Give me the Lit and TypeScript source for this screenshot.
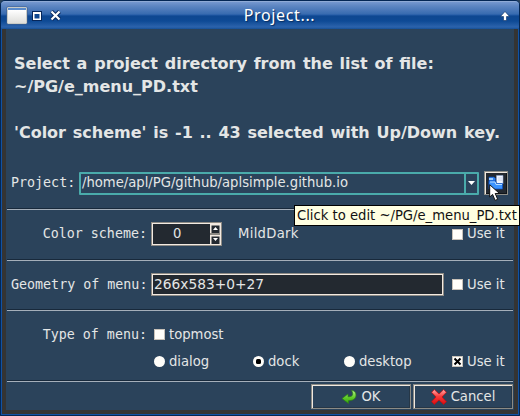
import { LitElement, html, css, svg } from "lit";
import { customElement, state } from "lit/decorators.js";

const folderIcon = svg`
  <svg class="ico16" viewBox="0 0 16 16">
    <path d="M1 2h5l1.500 1.500V12H1z" fill="#2a7ff0" stroke="#0b46a8" stroke-width=".6"/>
    <path d="M1 3h4v2H1z" fill="#9accff"/>
    <path d="M8.500 .5h6.500v8.500H8.500z" fill="#f2f6ff" stroke="#8fa6cc" stroke-width=".6"/>
    <path d="M10 3h4M10 5h4" stroke="#c8d4ea"/>
    <path d="M1 6h6.500l1 2.500h6L14.500 14H1z" fill="#3b93ff" stroke="#0b4fc0" stroke-width=".7"/>
    <path d="M2 7h5l1 2.500h6" fill="none" stroke="#b5dcff"/>
  </svg>`;

const okIcon = svg`
  <svg class="ico16" viewBox="0 0 16 16">
    <defs><linearGradient id="g" x1="0" y1="0" x2="0" y2="1"><stop offset="0" stop-color="#b9f58a"/><stop offset=".55" stop-color="#5fcb28"/><stop offset="1" stop-color="#35a010"/></linearGradient></defs>
    <path d="M10.500 1.500C13 1.500 15 3 15 6c0 3.800-3.200 5.700-7.500 5.700V14.500L1 9.500 7 5v2.800c3 0 4.500-.8 4.700-2.600.1-1.500-.4-2.500-1.200-3.700z" fill="url(#g)" stroke="#2b8412" stroke-width=".7"/>
  </svg>`;

const cancelIcon = svg`
  <svg class="ico16" viewBox="0 0 16 16">
    <defs><linearGradient id="r" x1="0" y1="0" x2="0" y2="1"><stop offset="0" stop-color="#ffb0b0"/><stop offset=".45" stop-color="#f83c3c"/><stop offset="1" stop-color="#d80c10"/></linearGradient></defs>
    <path d="M3.300.6 8 5 12.700.6l2.700 2.700L11 8l4.400 4.700-2.700 2.700L8 11l-4.700 4.400L.6 12.700 5 8 .6 3.300z" fill="url(#r)" stroke="#c50d12" stroke-width=".8" stroke-linejoin="round"/>
  </svg>`;

@customElement("app-root")
export class AppRoot extends LitElement {
  @state() private kind = "dock";
  @state() private project = "/home/apl/PG/github/aplsimple.github.io";

  static styles = css`
    :host { display: block; width: 520px; height: 416px; position: relative; overflow: hidden;
      background: #2b435b; color: #e4e6e6; white-space: nowrap;
      font: 14.65px/16px "DejaVu Sans Condensed", "DejaVu Sans", sans-serif; font-stretch: condensed; }
    *, *::before, *::after { box-sizing: border-box; }
    svg { display: block; flex: none; }
    .ico16 { width: 16px; height: 16px; }
    .window { height: 416px; background: #1152a4; border: 1px solid #032654; border-radius: 5px 5px 0 0;
      display: flex; flex-direction: column; }
    .title { height: 28px; flex: none; display: flex; align-items: center; padding: 0 9px 0 6px;
      border-radius: 4px 4px 0 0; border-top: 1px solid #8fabd6;
      background: linear-gradient(#7598cf 0, #5d86c2 4px, #386bb0 12px, #235ba7 13px, #0e4791 14px, #0e4a95 19px, #2c63ac 25px, #155096 27px); }
    .winicon { width: 20px; height: 17px; border: 1px solid #c9cbc6; border-radius: 1px; box-shadow: 0 0 0 .5px #405e8a;
      background: linear-gradient(#5b8ccc 0 2px, #ffffff 2px, #dededb 100%); }
    .winbtn { margin-left: 5px; }
    .winclose { margin-left: 8px; }
    .caption { flex: 1; text-align: center; font: 16px/22px "Noto Sans", sans-serif; letter-spacing: .65px; color: #fff;
      text-shadow: 1px 1px 1px #092e60; padding: 0 2px 1px 0; }
    .frame { flex: 1; margin: 0 1px 1px; padding: 0 4px 4px; background: #343434; min-height: 0; }
    .body { height: 100%; background: #2b435b; display: flex; flex-direction: column; }
    .intro { height: 134px; padding: 23px 8px 0; font: bold 16px/23px "DejaVu Sans", sans-serif; font-stretch: normal; white-space: pre; word-spacing: 1.2px; }
    .row { display: flex; align-items: center; flex: none; padding: 0 5px; }
    .r1 { height: 45px; padding-bottom: 5px; }
    .r2 { height: 49px; padding-bottom: 1px; }
    .r3 { height: 48px; padding-bottom: 1px; }
    .r4 { height: 69px; display: grid; grid-template-columns: 143px 99px 91px 108px 1fr; grid-template-rows: 27px 27px;
      padding-top: 10px; align-content: start; }
    .sep { height: 2px; flex: none; margin: 0 1px; background: #18293b; border-bottom: 1px solid #a5afba; }
    .label { font: 13.333px/16px "DejaVu Sans Mono", monospace; font-stretch: normal; width: 136px; text-align: right; flex: none; }
    .label.short { width: 64px; }
    .combo { margin-left: 4px; width: 400px; height: 23px; border: 2px solid #4aabab; display: flex; align-items: center; border-radius: 1px; }
    .value { flex: 1; padding: 0 0 2px 1px; }
    .drop { width: 13px; height: 19px; border-left: 2px solid #4aabab; display: grid; place-items: center; }
    .tool { margin-left: 5px; width: 24px; height: 24px; background: #232930; border: 1px solid #8e8e88;
      box-shadow: inset 1px 1px #f0e8df, inset -1px -1px #10151a; display: grid; place-items: center; }
    .field { background: #232930; border: 1px solid #8d8a84; box-shadow: inset 0 0 0 1px #f3eae1; height: 23px; margin-left: 4px; display: flex; align-items: center; }
    .spin { width: 71px; height: 24px; }
    .spin .value { padding-left: 21px; }
    .geo { width: 293px; padding: 0 0 1px 2px; font: 13.75px/16px "DejaVu Sans", sans-serif; font-stretch: normal; }
    .arrows { margin-right: 1px; }
    .scheme { margin-left: 16px; flex: 1; letter-spacing: .3px; padding-bottom: 2px; }
    .push { margin-left: auto; }
    .opt { display: flex; align-items: center; gap: 4px; }
    .text { padding-bottom: 2px; }
    .use { width: 57px; }
    .box { width: 11px; height: 11px; background: #fffefa; border: 1px solid #c8c2b9; display: grid; place-items: center; }
    .radio { width: 11px; height: 11px; border-radius: 50%; background: #fffefa; display: grid; place-items: center; }
    .dot { width: 5px; height: 5px; border-radius: 1.500px; background: #000; }
    .span2 { grid-column: 2 / 6; justify-self: start; }
    .buttons { display: flex; justify-content: flex-end; gap: 2px; padding: 2px 1px 0 0; }
    .btn { width: 100px; height: 25px; display: flex; align-items: center; justify-content: center; gap: 4px;
      border: 1px solid #8c8b85; box-shadow: inset 1px 1px #f0e8df, inset -1px -1px #263747; }
    .tip { position: absolute; left: 294px; top: 205px; width: 226px; height: 21px; background: #ffffe1; color: #111;
      border: 1px solid #000; padding-left: 2px; line-height: 18px; }
    .cursor { position: absolute; left: 489px; top: 184px; }
  `;

  private check(checked = false) {
    return html`<span class="box">${checked
      ? html`<svg width="9" height="9" viewBox="0 0 9 9"><path d="M1.500 1.500l6 6M7.500 1.500l-6 6" stroke="#000" stroke-width="2"/></svg>`
      : ""}</span>`;
  }

  private useIt(checked = false) {
    return html`<span class="opt use">${this.check(checked)}<span class="text">Use it</span></span>`;
  }

  private radio(name: string) {
    return html`<span class="opt" @click=${() => (this.kind = name)}><span class="radio">${this.kind === name
      ? html`<span class="dot"></span>` : ""}</span><span class="text">${name}</span></span>`;
  }

  render() {
    return html`
      <div class="window">
        <div class="title">
          <span class="winicon"></span>
          <svg class="winbtn" width="10" height="10" viewBox="0 0 10 10"><path d="M0 0h10v10H0z" fill="#06265a"/><path d="M1 1h8v8H1z" fill="#fff"/><path d="M2.500 3h5v4.500h-5z" fill="#0e4791"/></svg>
          <svg class="winclose" width="11" height="11" viewBox="0 0 11 11"><path d="M1.500 1.500l8 8M9.500 1.500l-8 8" stroke="#06265a" stroke-width="4"/><path d="M1.500 1.500l8 8M9.500 1.500l-8 8" stroke="#fff" stroke-width="2.200"/></svg>
          <span class="caption">Project...</span>
          <svg width="10" height="10" viewBox="0 0 10 10"><path d="M5 .5L9.500 5.500H6.500V9.500h-3V5.500H.5z" fill="#fff" stroke="#0a2d60" stroke-width=".6"/></svg>
        </div>
        <div class="frame"><div class="body">
          <div class="intro">Select a project directory from the list of file:
~/PG/e_menu_PD.txt

'Color scheme' is -1 .. 43 selected with Up/Down key.</div>
          <div class="row r1">
            <span class="label short">Project:</span>
            <div class="combo"><span class="value">${this.project}</span>
              <span class="drop"><svg width="7" height="4" viewBox="0 0 7 4"><path d="M0 0h7L3.500 4z" fill="#fff"/></svg></span></div>
            <div class="tool">${folderIcon}</div>
          </div>
          <div class="sep"></div>
          <div class="row r2">
            <span class="label">Color scheme:</span>
            <div class="field spin"><span class="value">0</span>
              <svg class="arrows" width="10" height="20" viewBox="0 0 10 20">
                <path d="M0 0h10v20H0z" fill="#8d8a84"/>
                <path d="M0 0h10v9H0zM0 11h10v9H0z" fill="#f3eae1"/>
                <path d="M1.500 1.500h8V9h-8zM1.500 12.500h8V20h-8z" fill="#232930"/>
                <path d="M3 6h5L5.500 3zM3 14h5l-2.500 3z" fill="#fff"/>
              </svg></div>
            <span class="scheme">MildDark</span>
            ${this.useIt()}
          </div>
          <div class="sep"></div>
          <div class="row r3">
            <span class="label">Geometry of menu:</span>
            <div class="field geo">266x583+0+27</div>
            <span class="push">${this.useIt()}</span>
          </div>
          <div class="sep"></div>
          <div class="row r4">
            <span class="label">Type of menu:</span>
            <span class="opt span2">${this.check()}<span class="text">topmost</span></span>
            <span></span>${this.radio("dialog")}${this.radio("dock")}${this.radio("desktop")}${this.useIt(true)}
          </div>
          <div class="sep"></div>
          <div class="buttons">
            <div class="btn">${okIcon}<span class="text">OK</span></div>
            <div class="btn">${cancelIcon}<span class="text">Cancel</span></div>
          </div>
        </div></div>
      </div>
      <div class="tip">Click to edit ~/PG/e_menu_PD.txt</div>
      <svg class="cursor" width="13" height="18" viewBox="0 0 13 18"><path d="M.7.700V13l2.900-2.600 2.500 6 2.600-1.100-2.500-5.800H10.500z" fill="#fff" stroke="#111" stroke-width="1"/></svg>
    `;
  }
}
